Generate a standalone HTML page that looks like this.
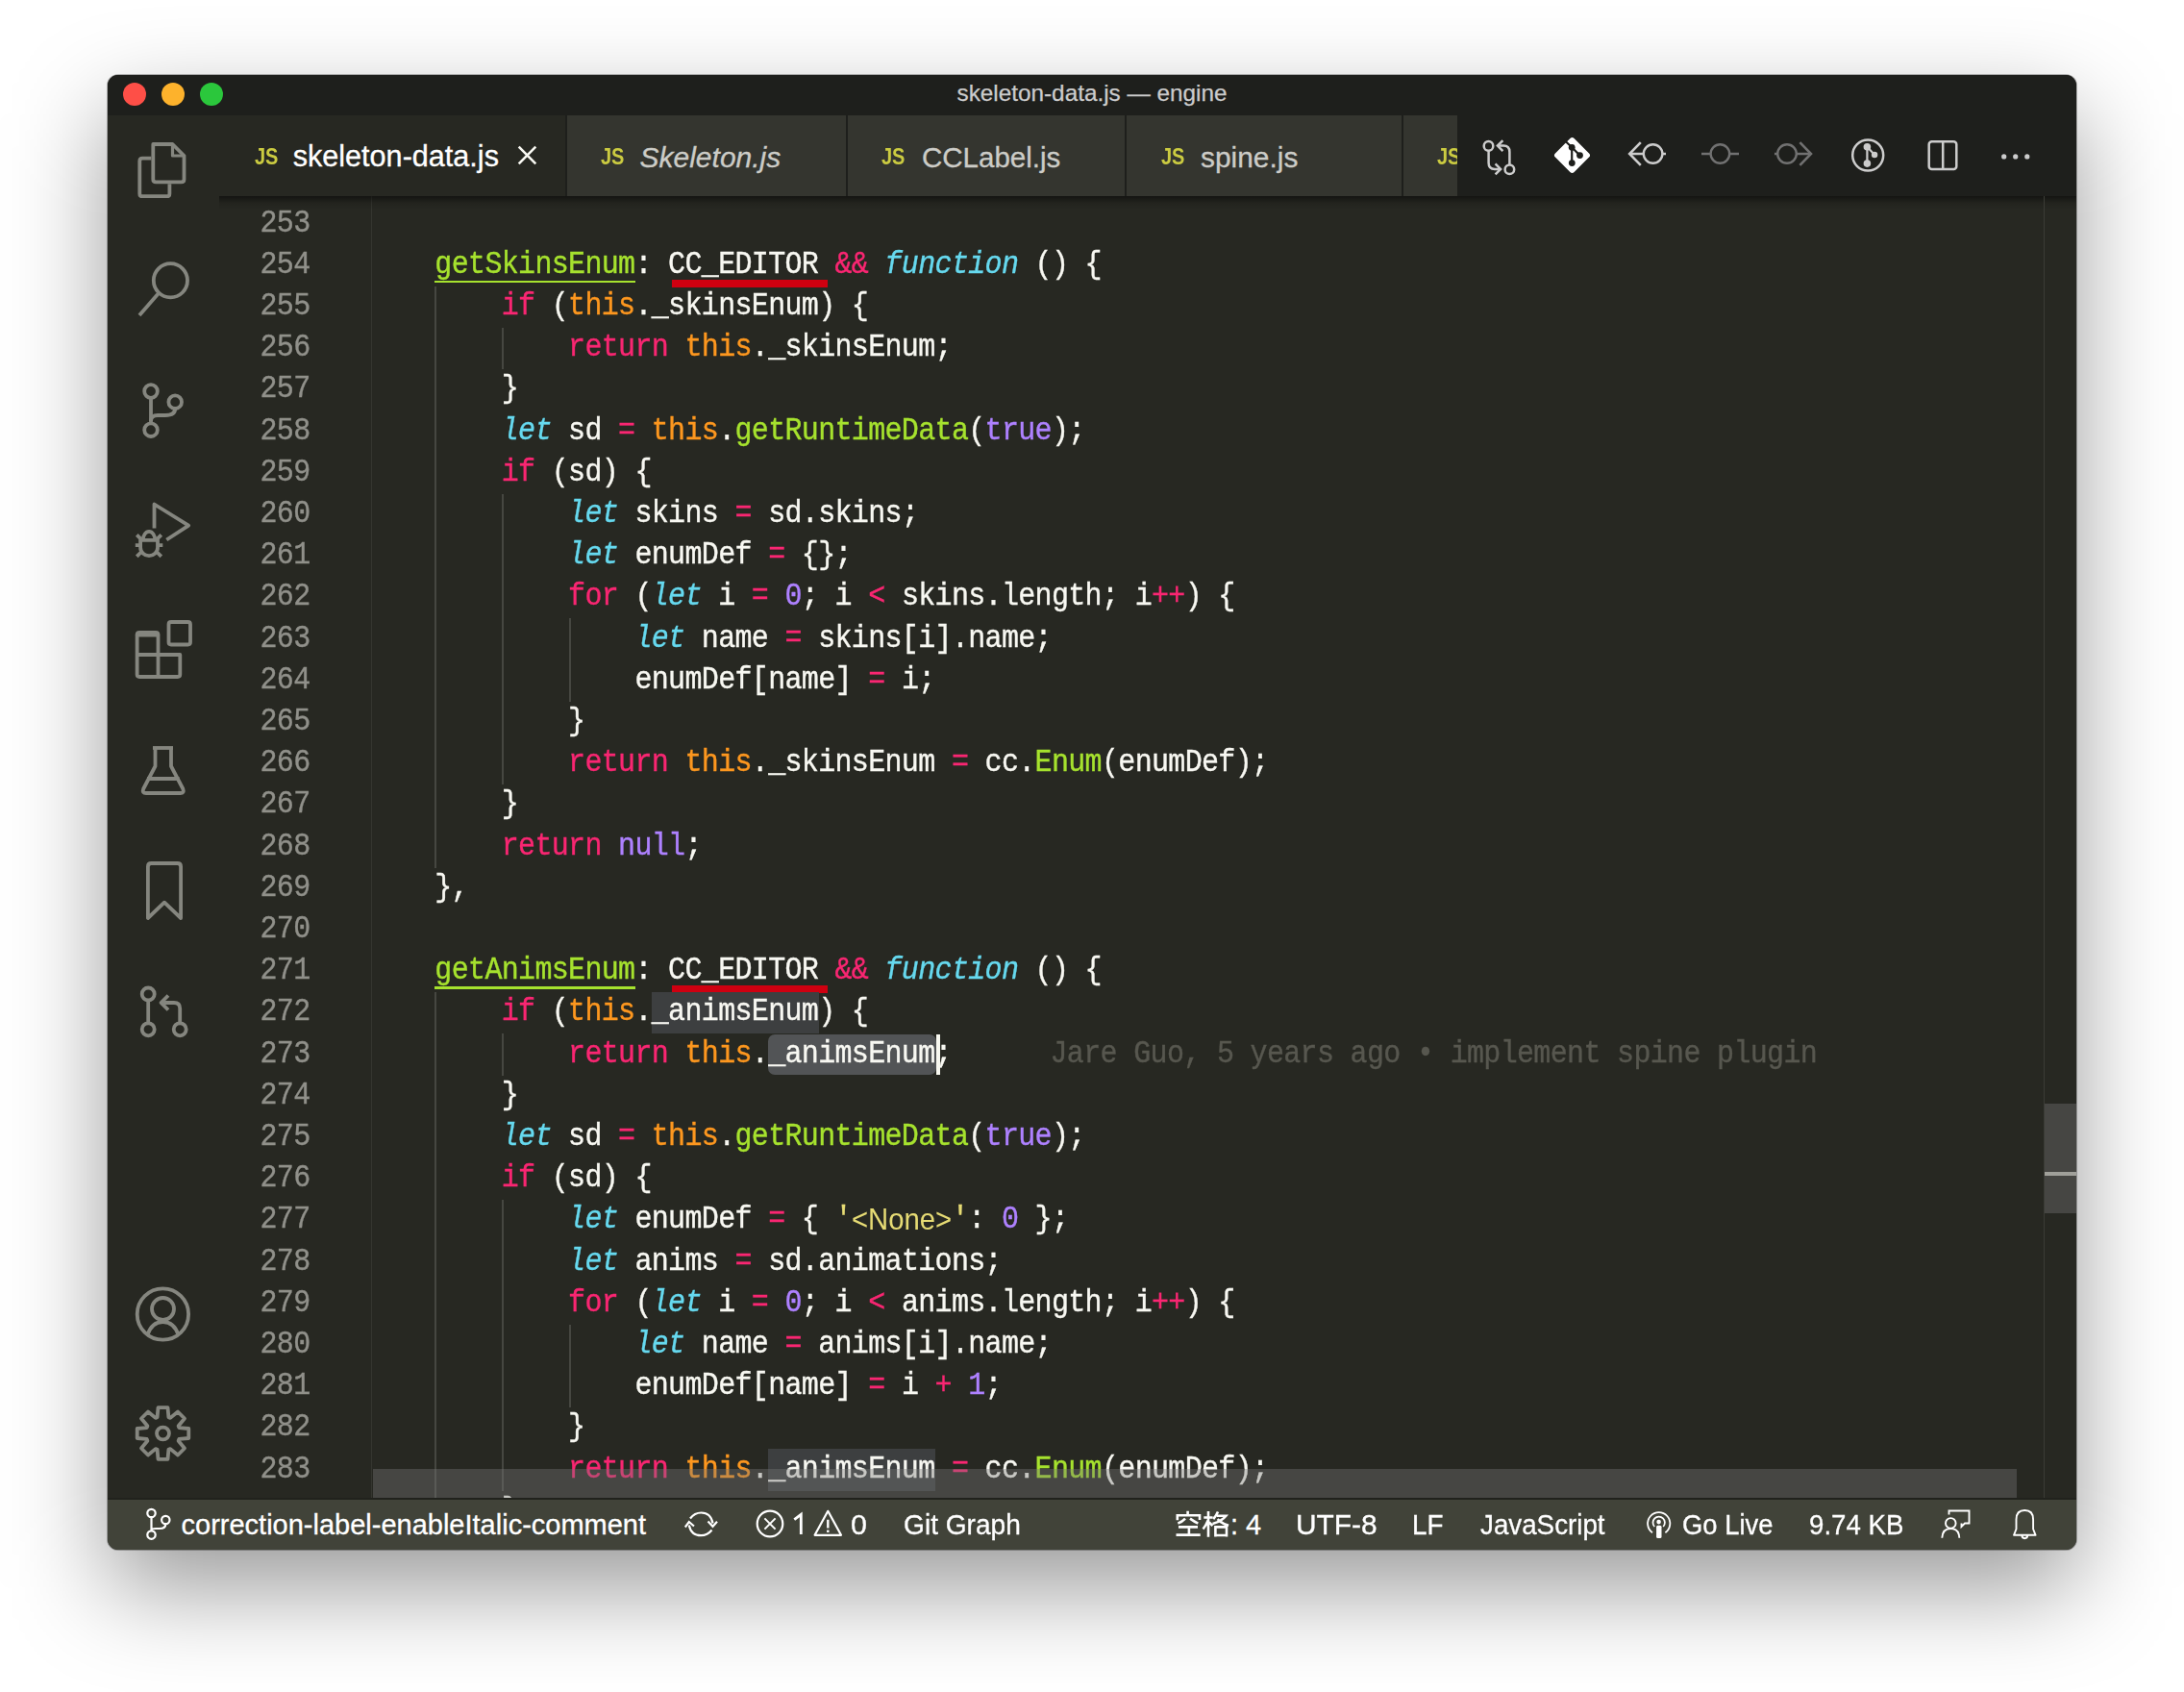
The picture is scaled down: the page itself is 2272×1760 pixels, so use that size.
<!DOCTYPE html>
<html><head><meta charset="utf-8">
<style>
html,body{margin:0;padding:0;width:2272px;height:1760px;overflow:hidden;background:#ffffff;}
#win{position:absolute;left:112px;top:78px;width:2048px;height:1534px;border-radius:11px;overflow:hidden;background:#272822;
}
#wshadow{position:absolute;left:112px;top:118px;width:2048px;height:1534px;border-radius:11px;background:rgba(0,0,0,0.40);filter:blur(50px);}
#wring{position:absolute;left:111px;top:77px;width:2050px;height:1536px;border-radius:12px;background:rgba(0,0,0,0.28);}
#title{position:absolute;left:0;top:0;width:2048px;height:42px;background:#1e1f1c;}
.tl{position:absolute;top:8px;width:24px;height:24px;border-radius:50%;}
#ttext{position:absolute;left:0;top:7.3px;width:2048px;text-align:center;font-family:"Liberation Sans",sans-serif;font-size:24.3px;line-height:24px;color:#cccccc;white-space:pre;-webkit-text-stroke:0.25px currentColor;}
#act{position:absolute;left:0;top:42px;width:116px;height:1440px;background:#272822;}
#tabs{position:absolute;left:116px;top:42px;width:1932px;height:84px;background:#1e1f1c;}
.tab{position:absolute;top:0;height:84px;background:#34352f;}
.tt{position:absolute;font-family:"Liberation Sans",sans-serif;white-space:pre;line-height:40px;-webkit-text-stroke:0.3px currentColor;}
.js{position:absolute;font-family:"Liberation Sans",sans-serif;font-weight:bold;color:#cbcb41;font-size:24.7px;line-height:30px;transform-origin:0 0;transform:scaleX(0.81);}
#editor{position:absolute;left:116px;top:126px;width:1932px;height:1354px;background:#272822;overflow:hidden;}
#status{position:absolute;left:0;top:1482px;width:2048px;height:52px;background:#414339;}
.st{position:absolute;top:0;font-family:"Liberation Sans",sans-serif;color:#ffffff;white-space:pre;line-height:40px;-webkit-text-stroke:0.3px currentColor;}
.ln{position:absolute;left:0;width:94.5px;text-align:right;font-family:"Liberation Mono",monospace;font-size:30px;line-height:43.2px;letter-spacing:-0.663px;color:#90908a;white-space:pre;transform-origin:0 29.583px;transform:scaleY(1.1);-webkit-text-stroke:0.35px currentColor;}
.tk{position:absolute;font-family:"Liberation Mono",monospace;font-size:30px;line-height:43.2px;letter-spacing:-0.663px;color:#f8f8f2;white-space:pre;transform-origin:0 29.583px;transform:scaleY(1.1);-webkit-text-stroke:0.35px currentColor;}
.tk.k{color:#f92672;}
.tk.s{color:#66d9ef;font-style:italic;}
.tk.t{color:#fd971f;}
.tk.f{color:#a6e22e;}
.tk.c{color:#ae81ff;}
.tk.q{color:#e6db74;}
.tk.qs{color:#e6db74;font-family:"Liberation Sans",sans-serif;letter-spacing:0;font-size:30.5px;transform-origin:0 29.583px;transform:scaleX(0.96);-webkit-text-stroke:0;}
.tk.u{color:#a6e22e;}
</style></head><body>
<div id="wshadow"></div><div id="wring"></div>
<div id="win">
  <div id="title">
    <div class="tl" style="left:16px;background:#fe4f47;"></div>
    <div class="tl" style="left:56px;background:#fdb22c;"></div>
    <div class="tl" style="left:96px;background:#2bc73c;"></div>
    <div id="ttext">skeleton-data.js — engine</div>
  </div>
  <div id="act">
  <svg width="116" height="1440" style="position:absolute;left:0;top:0" fill="none" stroke="#85867f" stroke-width="3.8" stroke-linejoin="round" stroke-linecap="butt">
    <!-- files -->
    <path d="M47.3 30 H67.5 L79.5 42 V66.5 Q79.5 69.3 76.7 69.3 H50.1 Q47.3 69.3 47.3 66.5 Z"/>
    <path d="M67.5 30 V42 H79.5" stroke-width="3.2"/>
    <path d="M45.3 44.6 H36.1 Q33.3 44.6 33.3 47.4 V81.4 Q33.3 84.2 36.1 84.2 H61.6 Q64.4 84.2 64.4 81.4 V71.3"/>
    <!-- search -->
    <circle cx="65.4" cy="171.8" r="17.6"/>
    <path d="M53 185 L33 208"/>
    <!-- source control -->
    <circle cx="45" cy="287" r="6.8"/>
    <circle cx="70.2" cy="298.2" r="6.8"/>
    <circle cx="45" cy="327.2" r="6.8"/>
    <path d="M45 293.8 V320.4"/>
    <path d="M70.2 305 Q70.2 312 60 312 H52 Q45 312 45 318"/>
    <!-- run & debug -->
    <path d="M48.5 429.5 V404.5 L84.2 426.6 L61.3 441.5"/>
    <path d="M36.8 441.8 A6.25 8.9 0 0 1 49.3 441.8"/>
    <path d="M34.1 441.8 H52 V449.5 A8.95 8.6 0 0 1 34.1 449.5 Z"/>
    <path d="M30.3 436.3 L34.8 440.8 M55.8 436.3 L51.3 440.8 M28.8 447.2 H34 M52.1 447.2 H57.3 M30.3 458.8 L34.6 454.5 M55.8 458.8 L51.5 454.5"/>
    <!-- extensions -->
    <path d="M30.6 540.5 H52.5 V561 H75.3 V581.5 Q75.3 584 72.8 584 H33.1 Q30.6 584 30.6 581.5 Z"/>
    <path d="M30.6 540.5 Q30.6 538 33.1 538 H50 Q52.5 538 52.5 540.5 M52.5 561 V584 M30.6 561 H52.5"/>
    <path d="M63.5 529.5 Q63.5 527 66 527 H83.5 Q86 527 86 529.5 V548 Q86 550.5 83.5 550.5 H66 Q63.5 550.5 63.5 548 Z"/>
    <!-- testing flask -->
    <path d="M47 658 H68"/>
    <path d="M49.5 658 V677 L37.2 700.5 Q35.5 705 40 705 H75.5 Q80 705 78.3 700.5 L66 677 V658"/>
    <path d="M41 690 H74.5"/>
    <!-- bookmark -->
    <path d="M41.9 835 V781.5 Q41.9 778 45.4 778 H72.6 Q76.1 778 76.1 781.5 V835 L59 818.7 Z"/>
    <!-- pull request -->
    <circle cx="42.2" cy="914" r="6.5"/>
    <circle cx="42.2" cy="950.8" r="6.5"/>
    <circle cx="75.2" cy="950.8" r="6.5"/>
    <path d="M42.2 920.5 V944.3"/>
    <path d="M75.2 944.3 V929 Q75.2 923 69 923 H56"/>
    <path d="M63 915.5 L55.5 923 L63 930.5"/>
    <!-- account -->
    <circle cx="57.4" cy="1247" r="26.7"/>
    <circle cx="57.5" cy="1241.5" r="11.5"/>
    <path d="M41.5 1268.5 Q46 1255 57.5 1255 Q69 1255 73.5 1268.5"/>
    <!-- settings gear -->
    <path id="gear" d="M51.6 1354.2 L52.5 1344.2 L62.5 1344.2 L63.4 1354.2 L65.2 1354.9 L73.0 1348.5 L80.0 1355.5 L73.6 1363.3 L74.3 1365.1 L84.3 1366.0 L84.3 1376.0 L74.3 1376.9 L73.6 1378.7 L80.0 1386.5 L73.0 1393.5 L65.2 1387.1 L63.4 1387.8 L62.5 1397.8 L52.5 1397.8 L51.6 1387.8 L49.8 1387.1 L42.0 1393.5 L35.0 1386.5 L41.4 1378.7 L40.7 1376.9 L30.7 1376.0 L30.7 1366.0 L40.7 1365.1 L41.4 1363.3 L35.0 1355.5 L42.0 1348.5 L49.8 1354.9 Z"/>
    <circle cx="57.5" cy="1371" r="6.45"/>
  </svg>
  </div>
  <div id="tabs">
    <div class="tab" style="left:0;width:360px;background:#272822;"></div>
    <div class="tab" style="left:362px;width:289.5px;"></div>
    <div class="tab" style="left:653.5px;width:288.2px;"></div>
    <div class="tab" style="left:943.7px;width:286.3px;"></div>
    <div class="tab" style="left:1232px;width:56px;overflow:hidden;"><div class="js" style="left:34.6px;top:27.5px;">JS</div></div>
    <div class="js" style="left:36.5px;top:27.5px;">JS</div>
    <div class="tt" style="left:76.7px;top:22.4px;font-size:30.6px;color:#ffffff;">skeleton-data.js</div>
    <svg width="22" height="22" style="position:absolute;left:309.5px;top:30.5px" stroke="#f8f8f2" stroke-width="2.6"><path d="M1.7 1.7 L19.3 19.3 M19.3 1.7 L1.7 19.3"/></svg>
    <div class="js" style="left:397px;top:27.7px;">JS</div>
    <div class="tt" style="left:437.5px;top:23.6px;font-size:30.0px;color:#ccccc7;font-style:italic;">Skeleton.js</div>
    <div class="js" style="left:689px;top:27.7px;">JS</div>
    <div class="tt" style="left:731px;top:23.8px;font-size:29.5px;color:#ccccc7;">CCLabel.js</div>
    <div class="js" style="left:979.5px;top:27.7px;">JS</div>
    <div class="tt" style="left:1021px;top:23.6px;font-size:29.9px;color:#ccccc7;">spine.js</div>
    <svg width="620" height="84" style="position:absolute;left:1280px;top:0" fill="none" stroke="#cccccc" stroke-width="2.5">
      <!-- compare (local x offset -1280) -->
      <g transform="translate(-1508,-120)">
        <circle cx="1548.5" cy="151.9" r="4.8"/>
        <path d="M1548.6 156.7 V169.5 Q1548.6 175.9 1555 175.9 H1561"/>
        <path d="M1555.6 170.4 L1561.1 175.9 L1555.6 181.4"/>
        <circle cx="1570.4" cy="176.2" r="4.8"/>
        <path d="M1570.4 171.4 V158 Q1570.4 151.6 1564 151.6 H1558"/>
        <path d="M1563.4 146.1 L1557.9 151.6 L1563.4 157.1"/>
        <!-- git logo -->
        <g transform="translate(1635.5,161.5) rotate(45)" stroke="none" fill="#ffffff">
          <rect x="-13.9" y="-13.9" width="27.8" height="27.8" rx="3"/>
        </g>
        <g stroke="#1e1f1c" stroke-width="2.2" fill="#1e1f1c">
          <path d="M1627 145.5 L1635.2 153.3 L1643.5 161.6 M1635.2 153.3 V169.6" fill="none"/>
          <circle cx="1635.2" cy="153.3" r="3.4" stroke="none"/>
          <circle cx="1643.5" cy="161.6" r="3.4" stroke="none"/>
          <circle cx="1635.3" cy="169.6" r="3.4" stroke="none"/>
        </g>
        <!-- <-O -->
        <circle cx="1719.6" cy="160" r="9.8" stroke-width="2.4"/>
        <path d="M1695 160 H1709.8 M1729.4 160 H1733" stroke-width="2.4"/>
        <path d="M1706.8 148.2 L1695.2 160 L1706.8 171.8" stroke-width="2.6"/>
        <!-- -O- dim -->
        <g stroke="#717171" stroke-width="2.4">
          <circle cx="1789.4" cy="160" r="9.8"/>
          <path d="M1770 160 H1779.6 M1799.2 160 H1809"/>
          <circle cx="1859" cy="160" r="9.8"/>
          <path d="M1846 160 H1849.2 M1868.8 160 H1883.5"/>
          <path d="M1872.4 148.2 L1884 160 L1872.4 171.8" stroke-width="2.6"/>
        </g>
        <!-- circle git -->
        <circle cx="1943.2" cy="161.5" r="16"/>
        <path d="M1942.4 152.8 V170.1 M1942.4 152.8 L1950.1 161" stroke-width="2.2"/>
        <g fill="#cccccc" stroke="none">
          <circle cx="1942.4" cy="152.8" r="3.8"/>
          <circle cx="1942.4" cy="170.1" r="3.8"/>
          <circle cx="1950.1" cy="161" r="3.2"/>
        </g>
        <!-- split -->
        <rect x="2006.7" y="147.3" width="28.6" height="28.7" rx="3"/>
        <path d="M2021.2 147.3 V176"/>
        <!-- dots -->
        <g fill="#cccccc" stroke="none">
          <circle cx="2084.7" cy="162.9" r="2.6"/>
          <circle cx="2096.7" cy="162.9" r="2.6"/>
          <circle cx="2108.8" cy="162.9" r="2.6"/>
        </g>
      </g>
    </svg>
  </div>
  <div id="editor">
    <!-- gutter line -->
    <div style="position:absolute;left:158px;top:0;width:1px;height:1354px;background:#34352f;"></div>
    <!-- indent guides -->
    <div style="position:absolute;left:224.00px;top:93.80px;width:2px;height:604.80px;background:#464741;"></div>
<div style="position:absolute;left:224.00px;top:828.20px;width:2px;height:561.60px;background:#464741;"></div>
<div style="position:absolute;left:294.40px;top:137.00px;width:2px;height:43.20px;background:#464741;"></div>
<div style="position:absolute;left:294.40px;top:309.80px;width:2px;height:302.40px;background:#464741;"></div>
<div style="position:absolute;left:294.40px;top:871.40px;width:2px;height:43.20px;background:#464741;"></div>
<div style="position:absolute;left:294.40px;top:1044.20px;width:2px;height:302.40px;background:#464741;"></div>
<div style="position:absolute;left:364.20px;top:439.40px;width:2px;height:86.40px;background:#464741;"></div>
<div style="position:absolute;left:364.20px;top:1173.80px;width:2px;height:86.40px;background:#464741;"></div>
    <!-- decorations -->
    <div style="position:absolute;left:224px;top:87.5px;width:209px;height:2.7px;background:#a6e22e;"></div>
    <div style="position:absolute;left:224px;top:821.9px;width:209px;height:2.7px;background:#a6e22e;"></div>
    <div style="position:absolute;left:471px;top:86.8px;width:162.1px;height:8.2px;background:#cf0010;"></div>
    <div style="position:absolute;left:471px;top:821.2px;width:162.1px;height:8.2px;background:#cf0010;"></div>
    <!-- word highlights -->
    <div style="position:absolute;left:450px;top:828.2px;width:174px;height:43.2px;background:#3d3f40;"></div>
    <div style="position:absolute;left:571.2px;top:1303.4px;width:173.4px;height:43.2px;background:#3d3f40;"></div>
    <!-- selection -->
    <div style="position:absolute;left:570.6px;top:872.4px;width:175px;height:41.2px;background:#525456;border-radius:7px;"></div>
    <div class="ln" style="top:7.52px">253</div>
<div class="ln" style="top:50.72px">254</div>
<span class="tk u" style="left:224.36px;top:50.72px">getSkinsEnum</span>
<span class="tk d" style="left:432.44px;top:50.72px">: CC_EDITOR </span>
<span class="tk k" style="left:640.52px;top:50.72px">&amp;&amp;</span>
<span class="tk s" style="left:692.54px;top:50.72px">function</span>
<span class="tk d" style="left:848.60px;top:50.72px">() {</span>
<div class="ln" style="top:93.92px">255</div>
<span class="tk k" style="left:293.72px;top:93.92px">if</span>
<span class="tk d" style="left:345.74px;top:93.92px">(</span>
<span class="tk t" style="left:363.08px;top:93.92px">this</span>
<span class="tk d" style="left:432.44px;top:93.92px">._skinsEnum) {</span>
<div class="ln" style="top:137.12px">256</div>
<span class="tk k" style="left:363.08px;top:137.12px">return</span>
<span class="tk t" style="left:484.46px;top:137.12px">this</span>
<span class="tk d" style="left:553.82px;top:137.12px">._skinsEnum;</span>
<div class="ln" style="top:180.32px">257</div>
<span class="tk d" style="left:293.72px;top:180.32px">}</span>
<div class="ln" style="top:223.52px">258</div>
<span class="tk s" style="left:293.72px;top:223.52px">let</span>
<span class="tk d" style="left:363.08px;top:223.52px">sd </span>
<span class="tk k" style="left:415.10px;top:223.52px">=</span>
<span class="tk t" style="left:449.78px;top:223.52px">this</span>
<span class="tk d" style="left:519.14px;top:223.52px">.</span>
<span class="tk f" style="left:536.48px;top:223.52px">getRuntimeData</span>
<span class="tk d" style="left:779.24px;top:223.52px">(</span>
<span class="tk c" style="left:796.58px;top:223.52px">true</span>
<span class="tk d" style="left:865.94px;top:223.52px">);</span>
<div class="ln" style="top:266.72px">259</div>
<span class="tk k" style="left:293.72px;top:266.72px">if</span>
<span class="tk d" style="left:345.74px;top:266.72px">(sd) {</span>
<div class="ln" style="top:309.92px">260</div>
<span class="tk s" style="left:363.08px;top:309.92px">let</span>
<span class="tk d" style="left:432.44px;top:309.92px">skins </span>
<span class="tk k" style="left:536.48px;top:309.92px">=</span>
<span class="tk d" style="left:571.16px;top:309.92px">sd.skins;</span>
<div class="ln" style="top:353.12px">261</div>
<span class="tk s" style="left:363.08px;top:353.12px">let</span>
<span class="tk d" style="left:432.44px;top:353.12px">enumDef </span>
<span class="tk k" style="left:571.16px;top:353.12px">=</span>
<span class="tk d" style="left:605.84px;top:353.12px">{};</span>
<div class="ln" style="top:396.32px">262</div>
<span class="tk k" style="left:363.08px;top:396.32px">for</span>
<span class="tk d" style="left:432.44px;top:396.32px">(</span>
<span class="tk s" style="left:449.78px;top:396.32px">let</span>
<span class="tk d" style="left:519.14px;top:396.32px">i </span>
<span class="tk k" style="left:553.82px;top:396.32px">=</span>
<span class="tk c" style="left:588.50px;top:396.32px">0</span>
<span class="tk d" style="left:605.84px;top:396.32px">; i </span>
<span class="tk k" style="left:675.20px;top:396.32px">&lt;</span>
<span class="tk d" style="left:709.88px;top:396.32px">skins.length; i</span>
<span class="tk k" style="left:969.98px;top:396.32px">++</span>
<span class="tk d" style="left:1004.66px;top:396.32px">) {</span>
<div class="ln" style="top:439.52px">263</div>
<span class="tk s" style="left:432.44px;top:439.52px">let</span>
<span class="tk d" style="left:501.80px;top:439.52px">name </span>
<span class="tk k" style="left:588.50px;top:439.52px">=</span>
<span class="tk d" style="left:623.18px;top:439.52px">skins[i].name;</span>
<div class="ln" style="top:482.72px">264</div>
<span class="tk d" style="left:432.44px;top:482.72px">enumDef[name] </span>
<span class="tk k" style="left:675.20px;top:482.72px">=</span>
<span class="tk d" style="left:709.88px;top:482.72px">i;</span>
<div class="ln" style="top:525.92px">265</div>
<span class="tk d" style="left:363.08px;top:525.92px">}</span>
<div class="ln" style="top:569.12px">266</div>
<span class="tk k" style="left:363.08px;top:569.12px">return</span>
<span class="tk t" style="left:484.46px;top:569.12px">this</span>
<span class="tk d" style="left:553.82px;top:569.12px">._skinsEnum </span>
<span class="tk k" style="left:761.90px;top:569.12px">=</span>
<span class="tk d" style="left:796.58px;top:569.12px">cc.</span>
<span class="tk f" style="left:848.60px;top:569.12px">Enum</span>
<span class="tk d" style="left:917.96px;top:569.12px">(enumDef);</span>
<div class="ln" style="top:612.32px">267</div>
<span class="tk d" style="left:293.72px;top:612.32px">}</span>
<div class="ln" style="top:655.52px">268</div>
<span class="tk k" style="left:293.72px;top:655.52px">return</span>
<span class="tk c" style="left:415.10px;top:655.52px">null</span>
<span class="tk d" style="left:484.46px;top:655.52px">;</span>
<div class="ln" style="top:698.72px">269</div>
<span class="tk d" style="left:224.36px;top:698.72px">},</span>
<div class="ln" style="top:741.92px">270</div>
<div class="ln" style="top:785.12px">271</div>
<span class="tk u" style="left:224.36px;top:785.12px">getAnimsEnum</span>
<span class="tk d" style="left:432.44px;top:785.12px">: CC_EDITOR </span>
<span class="tk k" style="left:640.52px;top:785.12px">&amp;&amp;</span>
<span class="tk s" style="left:692.54px;top:785.12px">function</span>
<span class="tk d" style="left:848.60px;top:785.12px">() {</span>
<div class="ln" style="top:828.32px">272</div>
<span class="tk k" style="left:293.72px;top:828.32px">if</span>
<span class="tk d" style="left:345.74px;top:828.32px">(</span>
<span class="tk t" style="left:363.08px;top:828.32px">this</span>
<span class="tk d" style="left:432.44px;top:828.32px">._animsEnum) {</span>
<div class="ln" style="top:871.52px">273</div>
<span class="tk k" style="left:363.08px;top:871.52px">return</span>
<span class="tk t" style="left:484.46px;top:871.52px">this</span>
<span class="tk d" style="left:553.82px;top:871.52px">._animsEnum;</span>
<div class="ln" style="top:914.72px">274</div>
<span class="tk d" style="left:293.72px;top:914.72px">}</span>
<div class="ln" style="top:957.92px">275</div>
<span class="tk s" style="left:293.72px;top:957.92px">let</span>
<span class="tk d" style="left:363.08px;top:957.92px">sd </span>
<span class="tk k" style="left:415.10px;top:957.92px">=</span>
<span class="tk t" style="left:449.78px;top:957.92px">this</span>
<span class="tk d" style="left:519.14px;top:957.92px">.</span>
<span class="tk f" style="left:536.48px;top:957.92px">getRuntimeData</span>
<span class="tk d" style="left:779.24px;top:957.92px">(</span>
<span class="tk c" style="left:796.58px;top:957.92px">true</span>
<span class="tk d" style="left:865.94px;top:957.92px">);</span>
<div class="ln" style="top:1001.12px">276</div>
<span class="tk k" style="left:293.72px;top:1001.12px">if</span>
<span class="tk d" style="left:345.74px;top:1001.12px">(sd) {</span>
<div class="ln" style="top:1044.32px">277</div>
<span class="tk s" style="left:363.08px;top:1044.32px">let</span>
<span class="tk d" style="left:432.44px;top:1044.32px">enumDef </span>
<span class="tk k" style="left:571.16px;top:1044.32px">=</span>
<span class="tk d" style="left:605.84px;top:1044.32px">{ </span>
<span class="tk q" style="left:640.52px;top:1044.32px">'</span>
<span class="tk qs" style="left:657.86px;top:1042.62px">&lt;None&gt;</span>
<span class="tk q" style="left:761.90px;top:1044.32px">'</span>
<span class="tk d" style="left:779.24px;top:1044.32px">: </span>
<span class="tk c" style="left:813.92px;top:1044.32px">0</span>
<span class="tk d" style="left:848.60px;top:1044.32px">};</span>
<div class="ln" style="top:1087.52px">278</div>
<span class="tk s" style="left:363.08px;top:1087.52px">let</span>
<span class="tk d" style="left:432.44px;top:1087.52px">anims </span>
<span class="tk k" style="left:536.48px;top:1087.52px">=</span>
<span class="tk d" style="left:571.16px;top:1087.52px">sd.animations;</span>
<div class="ln" style="top:1130.72px">279</div>
<span class="tk k" style="left:363.08px;top:1130.72px">for</span>
<span class="tk d" style="left:432.44px;top:1130.72px">(</span>
<span class="tk s" style="left:449.78px;top:1130.72px">let</span>
<span class="tk d" style="left:519.14px;top:1130.72px">i </span>
<span class="tk k" style="left:553.82px;top:1130.72px">=</span>
<span class="tk c" style="left:588.50px;top:1130.72px">0</span>
<span class="tk d" style="left:605.84px;top:1130.72px">; i </span>
<span class="tk k" style="left:675.20px;top:1130.72px">&lt;</span>
<span class="tk d" style="left:709.88px;top:1130.72px">anims.length; i</span>
<span class="tk k" style="left:969.98px;top:1130.72px">++</span>
<span class="tk d" style="left:1004.66px;top:1130.72px">) {</span>
<div class="ln" style="top:1173.92px">280</div>
<span class="tk s" style="left:432.44px;top:1173.92px">let</span>
<span class="tk d" style="left:501.80px;top:1173.92px">name </span>
<span class="tk k" style="left:588.50px;top:1173.92px">=</span>
<span class="tk d" style="left:623.18px;top:1173.92px">anims[i].name;</span>
<div class="ln" style="top:1217.12px">281</div>
<span class="tk d" style="left:432.44px;top:1217.12px">enumDef[name] </span>
<span class="tk k" style="left:675.20px;top:1217.12px">=</span>
<span class="tk d" style="left:709.88px;top:1217.12px">i </span>
<span class="tk k" style="left:744.56px;top:1217.12px">+</span>
<span class="tk c" style="left:779.24px;top:1217.12px">1</span>
<span class="tk d" style="left:796.58px;top:1217.12px">;</span>
<div class="ln" style="top:1260.32px">282</div>
<span class="tk d" style="left:363.08px;top:1260.32px">}</span>
<div class="ln" style="top:1303.52px">283</div>
<span class="tk k" style="left:363.08px;top:1303.52px">return</span>
<span class="tk t" style="left:484.46px;top:1303.52px">this</span>
<span class="tk d" style="left:553.82px;top:1303.52px">._animsEnum </span>
<span class="tk k" style="left:761.90px;top:1303.52px">=</span>
<span class="tk d" style="left:796.58px;top:1303.52px">cc.</span>
<span class="tk f" style="left:848.60px;top:1303.52px">Enum</span>
<span class="tk d" style="left:917.96px;top:1303.52px">(enumDef);</span>
<span class="tk d" style="left:293.72px;top:1346.72px">}</span>
    <!-- cursor -->
    <div style="position:absolute;left:746px;top:872.4px;width:4px;height:41.2px;background:#f8f8f0;"></div>
    <!-- blame -->
    <span class="tk" style="left:1092.5px;left:864.5px;top:871.52px;color:#57574f;">Jare Guo, 5 years ago • implement spine plugin</span>
    <!-- scroll shadow -->
    <div style="position:absolute;left:0;top:0;width:1932px;height:14px;background:linear-gradient(rgba(0,0,0,0.5),rgba(0,0,0,0.12) 50%,rgba(0,0,0,0));"></div>
    <!-- horizontal scrollbar -->
    <div style="position:absolute;left:160px;top:1324px;width:1710px;height:30px;background:rgba(121,121,121,0.38);"></div>
    <!-- vertical ruler + scrollbar -->
    <div style="position:absolute;left:1898px;top:0;width:1px;height:1354px;background:#3b3c36;"></div>
    <div style="position:absolute;left:1899px;top:944px;width:33px;height:114px;background:rgba(121,121,121,0.38);"></div>
    <div style="position:absolute;left:1899px;top:1015px;width:33px;height:4px;background:#a0a09a;"></div>
  </div>
  <div style="position:absolute;left:0;top:1480px;width:2048px;height:2px;background:#21221d;"></div>
  <div id="status">
    <svg width="2048" height="52" style="position:absolute;left:0;top:0" fill="none" stroke="#ffffff" stroke-width="2.2">
      <g transform="translate(-112,-1560)">
        <!-- branch -->
        <circle cx="157.5" cy="1574" r="4.2"/>
        <circle cx="157.5" cy="1596.6" r="4.2"/>
        <circle cx="172.3" cy="1581" r="4.2"/>
        <path d="M157.5 1578.2 V1592.4 M172.3 1585.2 Q172.3 1590 166 1590 H162 Q157.5 1590 157.5 1592"/>
        <!-- sync -->
        <path d="M718 1579.5 Q722.5 1573.5 729.5 1573.5 Q739.5 1573.5 741.5 1584.5" />
        <path d="M736.5 1582.5 L741.5 1587.8 L746 1582.8" />
        <path d="M740.5 1591.5 Q736 1597.2 729.2 1597.2 Q719 1597.2 716.8 1586.5" />
        <path d="M712.8 1588.5 L716.8 1583 L722 1587.5" />
        <!-- error -->
        <circle cx="801" cy="1585" r="13.3" stroke-width="2.2"/>
        <path d="M795.4 1579.4 L806.6 1590.6 M806.6 1579.4 L795.4 1590.6" stroke-width="2"/>
        <!-- one -->
        <path d="M826.3 1580.6 L833.3 1575.4 V1596" stroke-width="2.8" stroke-linejoin="miter"/>
        <!-- warning -->
        <path d="M861.3 1571.8 L875 1596.8 H847.6 Z" stroke-linejoin="round"/>
        <path d="M861.3 1580.8 V1589.5 M861.3 1591.5 V1594" stroke-width="2.4"/>
        <!-- CJK 空 -->
        <g stroke-width="2.6">
          <path d="M1235.6 1571.8 V1575 M1224.8 1581.2 V1576.3 H1248 V1581"/>
          <path d="M1233 1579.6 Q1230 1582.8 1225.4 1584.6 M1238 1579.6 Q1242 1582.5 1246.3 1584.6"/>
          <path d="M1226 1588.4 H1246 M1236.9 1588.4 V1596.6 M1223.5 1596.6 H1248.7"/>
          <!-- 格 -->
          <path d="M1252.3 1578.5 H1261.6 M1257 1571.9 V1598.8 M1256.7 1581.5 Q1254.5 1587 1251.5 1590.5 M1257.8 1583.5 L1261.5 1587"/>
          <path d="M1267 1572.4 Q1265 1577 1262.2 1580 M1266 1576.8 H1275.4 Q1271 1582.5 1261.5 1585 M1266.6 1580.1 Q1271 1585 1278.1 1586.7"/>
          <path d="M1264.4 1598.6 V1588.4 H1276 V1598.6 M1264.4 1597 H1276"/>
        </g>
        <!-- broadcast -->
        <path d="M1719 1594.2 A11.6 11.6 0 1 1 1732.4 1594.2" stroke-width="1.8"/>
        <path d="M1721.2 1588 A6.2 6.2 0 1 1 1730.2 1588" stroke-width="1.8"/>
        <circle cx="1725.6" cy="1583.1" r="2.3" fill="#ffffff" stroke="none"/>
        <rect x="1723.1" y="1586.7" width="5.4" height="13.4" rx="1.5" fill="#ffffff" stroke="none"/>
        <!-- feedback -->
        <path d="M2027.5 1575.5 V1571.5 H2048.5 V1584.5 H2044 L2040.5 1588 V1584.5" stroke-width="1.9"/>
        <circle cx="2029.3" cy="1584.4" r="5.3" stroke-width="1.9"/>
        <path d="M2020.3 1599.8 Q2020.8 1590 2029.3 1590 Q2037.8 1590 2038.3 1599.8" stroke-width="1.9"/>
        <!-- bell -->
        <path d="M2095 1596.8 L2097.5 1590.5 V1580.5 Q2097.5 1571 2106.3 1571 Q2115.1 1571 2115.1 1580.5 V1590.5 L2117.6 1596.8 Z" stroke-width="1.9" stroke-linejoin="round"/>
        <path d="M2103.3 1597.2 Q2103.6 1600.2 2106.3 1600.2 Q2109 1600.2 2109.3 1597.2" stroke-width="1.9"/>
      </g>
    </svg>
    <div class="st" style="left:76.50px;top:5.95px;font-size:29px;transform-origin:1px 0;transform:scaleX(1.0);">correction-label-enableItalic-comment</div>
<div class="st" style="left:773.00px;top:5.95px;font-size:29px;transform-origin:1px 0;transform:scaleX(1.05);">0</div>
<div class="st" style="left:828.00px;top:5.95px;font-size:29px;transform-origin:1px 0;transform:scaleX(0.969);">Git Graph</div>
<div class="st" style="left:1168.00px;top:5.95px;font-size:29px;transform-origin:2px 0;transform:scaleX(1.0);">: 4</div>
<div class="st" style="left:1236.00px;top:5.95px;font-size:29px;transform-origin:2px 0;transform:scaleX(1.03);">UTF-8</div>
<div class="st" style="left:1357.00px;top:5.95px;font-size:29px;transform-origin:2px 0;transform:scaleX(0.96);">LF</div>
<div class="st" style="left:1427.80px;top:5.95px;font-size:29px;transform-origin:0px 0;transform:scaleX(0.957);">JavaScript</div>
<div class="st" style="left:1637.90px;top:5.95px;font-size:29px;transform-origin:1px 0;transform:scaleX(0.945);">Go Live</div>
<div class="st" style="left:1769.60px;top:5.95px;font-size:29px;transform-origin:1px 0;transform:scaleX(0.953);">9.74 KB</div>
  </div>
</div>
</body></html>
